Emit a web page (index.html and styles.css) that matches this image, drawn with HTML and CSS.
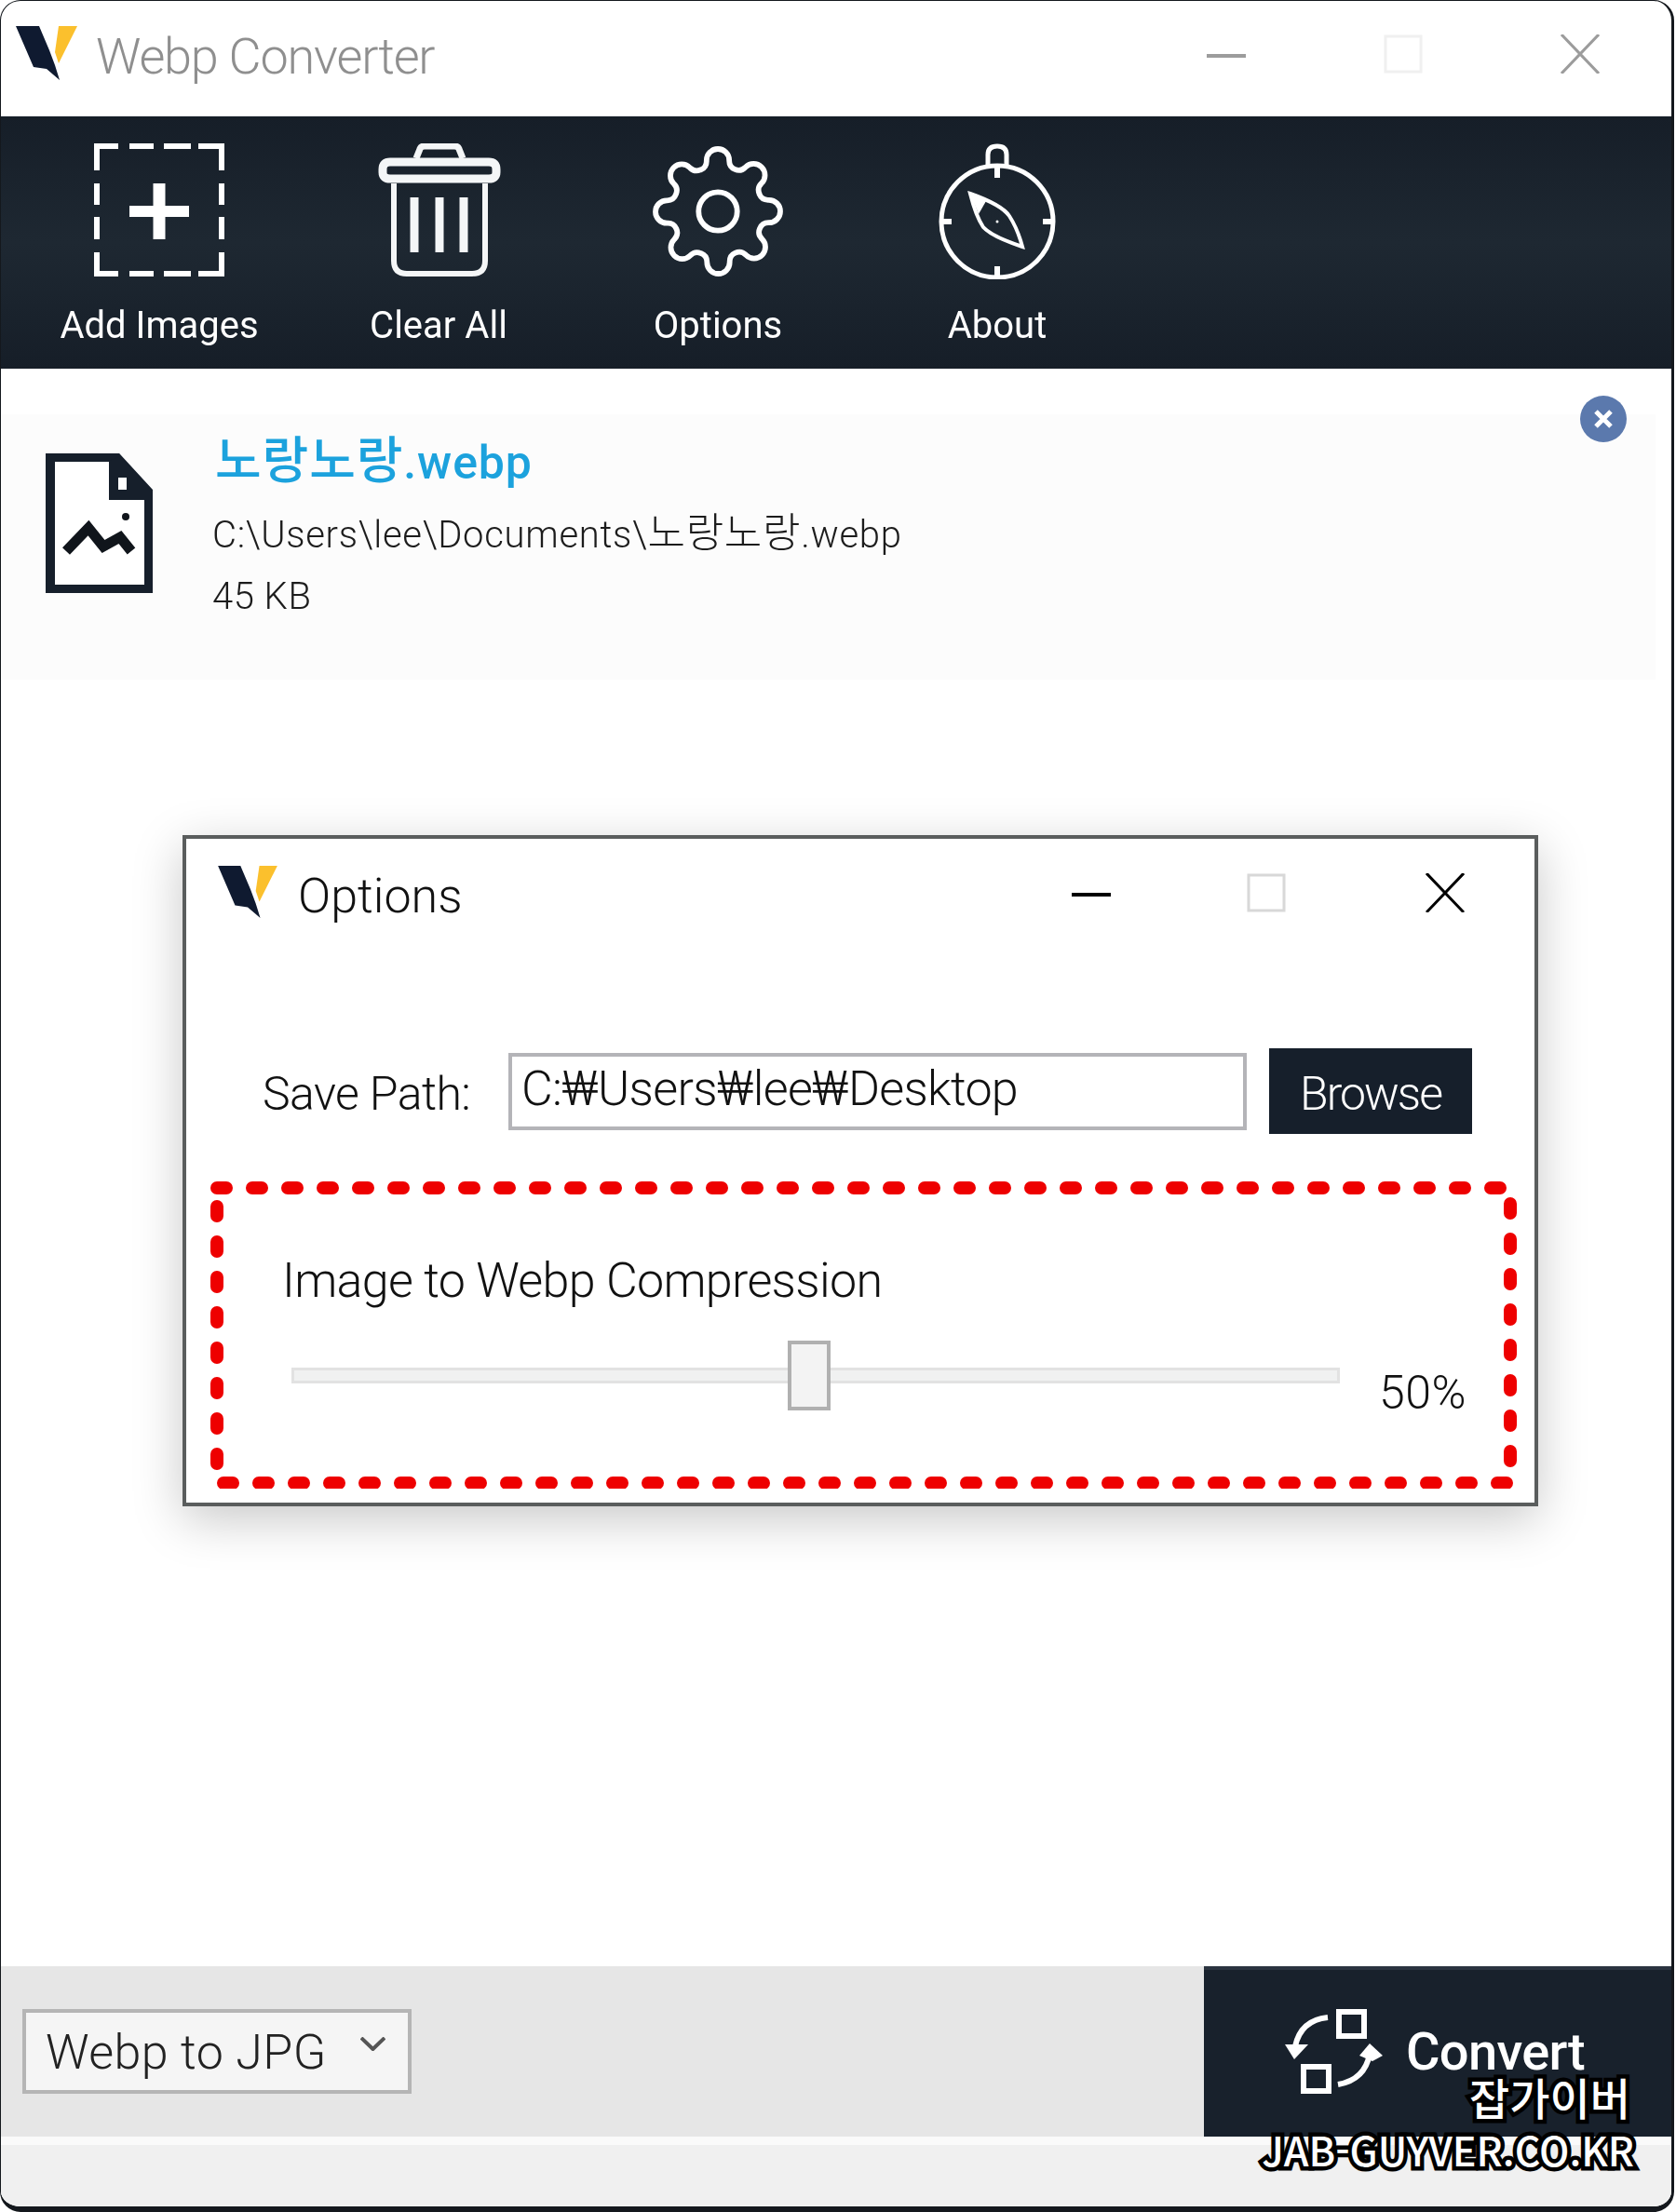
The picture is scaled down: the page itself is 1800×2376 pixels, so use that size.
FILE: index.html
```html
<!DOCTYPE html>
<html lang="ko">
<head>
<meta charset="utf-8">
<title>Webp Converter</title>
<link rel="stylesheet" href="styles.css">
</head>
<body>
<div class="window">
  <header class="titlebar">
    <svg class="logo" viewBox="0 0 66 58"><polygon fill="#0f1a30" points="0,0 25,0 36,26 42,42 47,58 33,46 19,44"/><polygon fill="#fbc02d" points="46,0 66,0 46,40 42,28"/></svg>
    <span class="app-title">Webp Converter</span>
    <div class="controls controls-main">
      <svg class="ctl" viewBox="0 0 42 42"><rect y="21" width="42" height="4" fill="#9c9c9c"/></svg>
      <svg class="ctl" viewBox="0 0 42 42"><rect x="2" y="2" width="38" height="38" fill="none" stroke="#f0f0f0" stroke-width="3"/></svg>
      <svg class="ctl" viewBox="0 0 42 42"><path d="M1 0L41 42M41 0L1 42" stroke="#9c9c9c" stroke-width="3" fill="none"/></svg>
    </div>
  </header>

  <nav class="toolbar">
    <div class="tool">
      <svg class="tool-icon" viewBox="0 0 140 146" fill="none" stroke="#fff" stroke-width="6">
        <path d="M3 29V3H26M38 3H64M75 3H104M112 3H137V29M137 43V66M137 79V103M137 117V140H112M104 140H75M64 140H38M26 140H3V117M3 103V79M3 66V43"/>
        <path d="M38 73H102" stroke-width="12"/><path d="M70 43V103" stroke-width="13"/>
      </svg>
      <span class="tool-label">Add Images</span>
    </div>
    <div class="tool">
      <svg class="tool-icon" viewBox="0 0 140 146" fill="none" stroke="#f4f6f7" stroke-width="6">
        <path d="M46 16L50 6Q51 3 55 3H87Q91 3 92 6L96 16" stroke-width="7"/>
        <path d="M18 20H124Q132 20 132 28V31Q132 38 124 38H18Q10 38 10 31V28Q10 20 18 20Z" stroke-width="9"/>
        <path d="M22 43V126Q22 140 36 140H106Q120 140 120 126V43"/>
        <path d="M44 58V117M71 58V117M97 58V117" stroke-width="9"/>
      </svg>
      <span class="tool-label">Clear All</span>
    </div>
    <div class="tool">
      <svg class="tool-icon gear" viewBox="1 1 22 22" fill="none" stroke="#fff" stroke-width=".95">
        <circle cx="12" cy="12" r="3.4"/>
        <path d="M19.4 15a1.65 1.65 0 0 0 .33 1.82l.06.06a2 2 0 0 1 0 2.83 2 2 0 0 1-2.83 0l-.06-.06a1.65 1.65 0 0 0-1.82-.33 1.65 1.65 0 0 0-1 1.51V21a2 2 0 0 1-2 2 2 2 0 0 1-2-2v-.09A1.65 1.65 0 0 0 9 19.4a1.65 1.65 0 0 0-1.82.33l-.06.06a2 2 0 0 1-2.83 0 2 2 0 0 1 0-2.83l.06-.06a1.65 1.65 0 0 0 .33-1.82 1.65 1.65 0 0 0-1.51-1H3a2 2 0 0 1-2-2 2 2 0 0 1 2-2h.09A1.65 1.65 0 0 0 4.6 9a1.65 1.65 0 0 0-.33-1.82l-.06-.06a2 2 0 0 1 0-2.83 2 2 0 0 1 2.83 0l.06.06a1.65 1.65 0 0 0 1.82.33H9a1.65 1.65 0 0 0 1-1.51V3a2 2 0 0 1 2-2 2 2 0 0 1 2 2v.09a1.65 1.65 0 0 0 1 1.51 1.65 1.65 0 0 0 1.82-.33l.06-.06a2 2 0 0 1 2.83 0 2 2 0 0 1 0 2.83l-.06.06a1.65 1.65 0 0 0-.33 1.82V9a1.65 1.65 0 0 0 1.51 1H21a2 2 0 0 1 2 2 2 2 0 0 1-2 2h-.09a1.65 1.65 0 0 0-1.51 1z"/>
      </svg>
      <span class="tool-label">Options</span>
    </div>
    <div class="tool">
      <svg class="tool-icon" viewBox="0 0 140 146" fill="none" stroke="#fff" stroke-width="5">
        <circle cx="70" cy="84" r="60"/>
        <path d="M60 24V12Q60 3 70 3Q80 3 80 12V24"/>
        <path d="M70 24V37M70 132V144M10 84H21M119 84H130" stroke-width="6"/>
        <path d="M41 54Q75 66 83 78Q92 92 97 111Q64 100 55 90Q47 78 41 54Z" stroke-width="4"/>
        <path d="M41 54L58 62L50 76Z" fill="#fff" stroke="none"/>
        <circle cx="70" cy="84" r="1.5" fill="#fff" stroke="none"/>
      </svg>
      <span class="tool-label">About</span>
    </div>
  </nav>

  <main class="list">
    <div class="file-row">
      <svg class="file-icon" viewBox="0 0 115 150">
        <path d="M5 4H76L111 42V146H5Z" fill="#fff" stroke="#161f2b" stroke-width="10"/>
        <path d="M68 8V50H111V38L78 4Z" fill="#161f2b"/>
        <rect x="78" y="26" width="9" height="13" fill="#fff"/>
        <path d="M22 105L46 80L62 100L80 90L92 105" fill="none" stroke="#10151b" stroke-width="11"/>
        <circle cx="86" cy="68" r="4" fill="#10151b"/>
      </svg>
      <div class="file-info">
        <div class="file-name"><span class="ko">노랑노랑</span>.webp</div>
        <div class="file-path">C:\Users\lee\Documents\<span class="ko">노랑노랑</span>.webp</div>
        <div class="file-size">45 KB</div>
      </div>
      <svg class="file-remove" viewBox="0 0 50 50"><circle cx="25" cy="25" r="25" fill="#5b79ad"/><path d="M17 17L33 33M33 17L17 33" stroke="#fff" stroke-width="5"/></svg>
    </div>
  </main>

  <footer class="footer">
    <div class="format">
      <span class="format-text">Webp to JPG</span>
      <svg class="chev" viewBox="0 0 27 15"><path d="M1 1L13.5 13L26 1" fill="none" stroke="#555" stroke-width="4"/></svg>
    </div>
    <button class="convert">
      <svg class="convert-icon" viewBox="0 0 106 92" fill="none" stroke="#fff">
        <rect x="58" y="3" width="27" height="26" stroke-width="6"/>
        <rect x="20" y="62" width="27" height="26" stroke-width="6"/>
        <path d="M46 9Q17 12 11 40" stroke-width="6"/>
        <path d="M0 38H25L10 54Z" fill="#fff" stroke="none"/>
        <path d="M57 81Q86 76 91 48" stroke-width="6"/>
        <path d="M91 37L105 50L94 56L80 50Z" fill="#fff" stroke="none"/>
      </svg>
      <span class="convert-label">Convert</span>
    </button>
  </footer>
  <div class="status"></div>

  <section class="dialog">
    <div class="dlg-title">
      <svg class="dlg-logo" viewBox="0 0 66 58"><polygon fill="#0f1a30" points="0,0 25,0 36,26 42,42 47,58 33,46 19,44"/><polygon fill="#fbc02d" points="46,0 66,0 46,40 42,28"/></svg>
      <span class="dlg-name">Options</span>
      <div class="controls controls-dlg">
        <svg class="ctl" viewBox="0 0 42 42"><rect y="21" width="42" height="4" fill="#000"/></svg>
        <svg class="ctl ctl-mid" viewBox="0 0 42 42"><rect x="2" y="2" width="38" height="38" fill="none" stroke="#d8d8d8" stroke-width="3"/></svg>
        <svg class="ctl" viewBox="0 0 42 42"><path d="M1 0L41 42M41 0L1 42" stroke="#000" stroke-width="3" fill="none"/></svg>
      </div>
    </div>
    <div class="save-row">
      <span class="save-label">Save Path:</span>
      <div class="path-input">C:₩Users₩lee₩Desktop</div>
      <button class="browse">Browse</button>
    </div>
    <div class="compress">
      <svg class="dash" viewBox="0 0 1420 331" fill="none"><rect x="7" y="8" width="1389" height="317" stroke="#ee0000" stroke-width="14" stroke-linecap="round" stroke-dasharray="10 28"/></svg>
      <div class="compress-label">Image to Webp Compression</div>
      <div class="slider-row">
        <div class="track"><div class="thumb"></div></div>
        <span class="value">50%</span>
      </div>
    </div>
  </section>

  <div class="watermark">
    <div class="wm-ko">잡가이버</div>
    <div class="wm-en">JAB-GUYVER.CO.KR</div>
  </div>
</div>
</body>
</html>
```
FILE: styles.css
```css
* { box-sizing: border-box; }
html, body { margin: 0; padding: 0; background: #fff; }
body { width: 1800px; height: 2376px; font-family: Roboto, "Noto Sans CJK KR", sans-serif; font-weight: 300; color: #000; overflow: hidden; }

.window {
  position: relative;
  width: 1798px;
  height: 2376px;
  display: flex;
  flex-direction: column;
  background: #fff;
  border-style: solid;
  border-color: #14181d;
  border-width: 1px 3px 6px 1px;
  border-radius: 22px;
  overflow: hidden;
}

/* the reference is an upscaled capture: text and icons are slightly soft */
.app-title, .logo, .tool-icon, .tool-label, .file-icon, .file-info, .file-remove,
.format-text, .chev, .convert-icon, .convert-label, .dlg-logo, .dlg-name,
.save-label, .path-input, .browse, .compress-label, .value {
  filter: blur(.6px);
}

.titlebar { height: 124px; flex: none; display: flex; align-items: flex-start; padding: 27px 0 0 16px; }
.logo { width: 66px; height: 58px; flex: none; }
.app-title { margin: 1px 0 0 20px; font-size: 54px; line-height: 64px; letter-spacing: -1.2px; color: #8f8f8f; }
.controls { display: flex; margin-left: auto; }
.ctl { width: 42px; height: 42px; flex: none; display: block; }
.controls-main { gap: 148px; margin-top: 9px; padding-right: 77px; }

.toolbar {
  height: 271px;
  flex: none;
  display: flex;
  padding-left: 20px;
  background: linear-gradient(#161e28, #1e2832 50%, #161e28);
}
.tool { width: 300px; display: flex; flex-direction: column; align-items: center; padding-top: 29px; color: #fff; }
.tool-icon { width: 140px; height: 146px; flex: none; }
.gear { width: 134px; height: 134px; margin: 6px 0; overflow: visible; }
.tool-label { margin-top: 24px; font-size: 40px; line-height: 52px; font-weight: 400; }

.list { flex: 1; min-height: 0; padding-top: 49px; }
.file-row {
  position: relative;
  height: 285px;
  margin-right: 17px;
  display: flex;
  padding: 42px 0 0 48px;
  background: #fcfcfc;
}
.file-icon { width: 115px; height: 150px; flex: none; }
.file-info { margin: -24px 0 0 67px; }
.file-name { font-size: 50px; line-height: 66px; letter-spacing: .9px; color: #1ca2dd; font-weight: 500; }
.file-name .ko { font-size: 1.08em; }
.file-path { margin: 17px 0 0 -3px; font-size: 40px; line-height: 52px; letter-spacing: .7px; color: #1c1c1c; }
.file-path .ko { font-size: 1.1em; }
.file-size { margin: 14px 0 0 -3px; font-size: 40px; line-height: 52px; letter-spacing: .5px; color: #1c1c1c; }
.file-remove { position: absolute; top: -20px; right: 31px; width: 50px; height: 50px; }

.footer { height: 183px; flex: none; display: flex; align-items: stretch; justify-content: space-between; background: #e6e6e6; padding-left: 23px; }
.format {
  align-self: center;
  width: 418px;
  height: 91px;
  display: flex;
  align-items: center;
  padding: 2px 24px 0 21px;
  border: 4px solid #b5b5b5;
  background: #f5f5f5;
}
.format-text { font-size: 52px; line-height: 64px; letter-spacing: .4px; color: #222; }
.chev { width: 27px; height: 15px; margin: -18px 0 0 auto; }
.convert {
  width: 502px;
  display: flex;
  align-items: flex-start;
  padding: 42px 0 0 87px;
  border: 0;
  border-top: 4px solid #2b3440;
  background: #18212c;
  color: #fff;
  font-family: inherit;
}
.convert-icon { width: 106px; height: 92px; flex: none; }
.convert-label { margin: 13px 0 0 24px; font-size: 56px; line-height: 66px; font-weight: 500; letter-spacing: -.7px; }
.status { height: 75px; flex: none; background: linear-gradient(#fafafa 12%, #f0f0f0 12%); }

.dialog {
  position: absolute;
  left: 195px;
  top: 896px;
  width: 1456px;
  height: 721px;
  display: flex;
  flex-direction: column;
  background: #fff;
  border: 4px solid #5a5d5d;
  box-shadow: 0 14px 50px rgba(0, 0, 0, .22);
}
.dlg-title { height: 225px; flex: none; display: flex; align-items: flex-start; padding: 29px 75px 0 34px; }
.dlg-logo { width: 66px; height: 56px; flex: none; margin-left: -1px; }
.dlg-name { margin: 1px 0 0 21px; font-size: 52px; line-height: 64px; color: #111; }
.controls-dlg { gap: 146px; margin-top: 8px; }
.ctl-mid { margin-right: 4px; }
.save-row { display: flex; align-items: center; height: 92px; flex: none; padding-left: 82px; }
.save-label { width: 264px; flex: none; font-size: 50px; line-height: 60px; letter-spacing: -.6px; margin-top: 6px; color: #111; }
.path-input { width: 793px; height: 83px; flex: none; padding: 0 0 8px 10px; border: 4px solid #b4b4b8; font-size: 52px; line-height: 70px; letter-spacing: -.7px; color: #111; white-space: nowrap; }
.browse { width: 218px; height: 92px; flex: none; margin-left: 24px; border: 0; background: #161f2b; color: #fff; font-family: inherit; font-weight: 300; font-size: 50px; line-height: 60px; letter-spacing: -2px; padding: 6px 0 0; }
.compress { position: relative; width: 1420px; height: 331px; margin: 50px 0 0 26px; flex: none; padding: 76px 0 0 77px; }
.dash { position: absolute; left: 0; top: 0; width: 1420px; height: 331px; }
.compress-label { font-size: 52px; line-height: 64px; letter-spacing: -.68px; color: #111; }
.slider-row { display: flex; margin-top: 58px; padding-left: 10px; }
.track { position: relative; width: 1126px; height: 17px; margin-top: 3px; border: 3px solid #e2e2e2; background: #f0f1f1; flex: none; }
.thumb { position: absolute; left: 530px; top: -32px; width: 46px; height: 75px; border: 4px solid #b0b0b0; background: #f3f3f3; }
.value { margin: 0 0 0 42px; font-size: 50px; line-height: 60px; letter-spacing: .5px; padding-top: 0; color: #111; }

.watermark {
  position: absolute;
  right: 40px;
  top: 2219px;
  text-align: right;
  font-family: "Noto Sans CJK KR", "Liberation Sans", sans-serif;
  font-weight: 500;
  color: #fff;
  paint-order: stroke fill;
  -webkit-text-stroke: 9px #000;
}
.wm-ko { font-size: 47px; line-height: 64px; padding-right: 4px; }
.wm-en { font-size: 43px; line-height: 49px; white-space: nowrap; }
```
